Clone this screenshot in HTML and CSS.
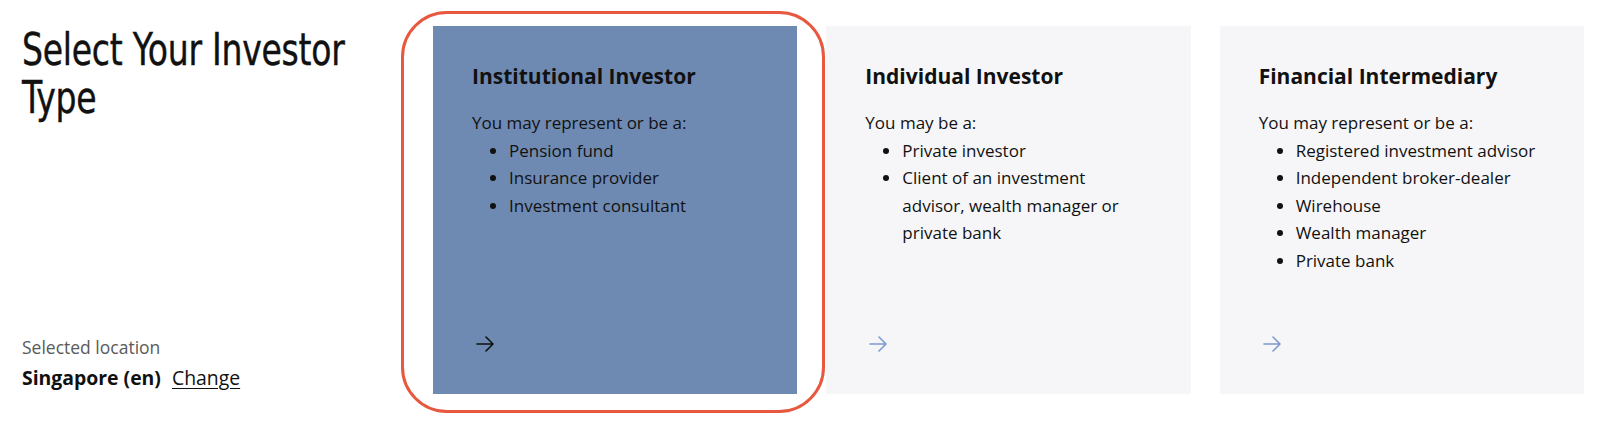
FILE: index.html
```html
<!DOCTYPE html>
<html lang="en">
<head>
<meta charset="utf-8">
<title>Select Your Investor Type</title>
<link rel="stylesheet" href="styles.css">
</head>
<body>
<main class="page">
  <section class="intro">
    <h1 class="title">Select Your Investor Type</h1>
    <div class="location">
      <p class="location-label">Selected location</p>
      <p class="location-value"><strong>Singapore (en)</strong><a class="change" href="#">Change</a></p>
    </div>
  </section>
  <section class="cards">
    <a class="card card-active" href="#">
      <span class="highlight"></span>
      <h2 class="card-title">Institutional Investor</h2>
      <p class="card-lead">You may represent or be a:</p>
      <ul class="card-list">
        <li>Pension fund</li>
        <li>Insurance provider</li>
        <li>Investment consultant</li>
      </ul>
      <svg class="arrow" width="18" height="16" viewBox="0 0 18 16" aria-hidden="true"><path d="M1 8H17M10 1L17 8L10 15" fill="none" stroke="currentColor" stroke-width="1.6" stroke-linecap="round" stroke-linejoin="round"/></svg>
    </a>
    <a class="card" href="#">
      <h2 class="card-title">Individual Investor</h2>
      <p class="card-lead">You may be a:</p>
      <ul class="card-list">
        <li>Private investor</li>
        <li>Client of an investment advisor, wealth manager or private bank</li>
      </ul>
      <svg class="arrow" width="18" height="16" viewBox="0 0 18 16" aria-hidden="true"><path d="M1 8H17M10 1L17 8L10 15" fill="none" stroke="currentColor" stroke-width="1.6" stroke-linecap="round" stroke-linejoin="round"/></svg>
    </a>
    <a class="card" href="#">
      <h2 class="card-title">Financial Intermediary</h2>
      <p class="card-lead">You may represent or be a:</p>
      <ul class="card-list">
        <li>Registered investment advisor</li>
        <li>Independent broker-dealer</li>
        <li>Wirehouse</li>
        <li>Wealth manager</li>
        <li>Private bank</li>
      </ul>
      <svg class="arrow" width="18" height="16" viewBox="0 0 18 16" aria-hidden="true"><path d="M1 8H17M10 1L17 8L10 15" fill="none" stroke="currentColor" stroke-width="1.6" stroke-linecap="round" stroke-linejoin="round"/></svg>
    </a>
  </section>
</main>
</body>
</html>
```

FILE: styles.css
```css
* { box-sizing: border-box; }

html, body {
  margin: 0;
  padding: 0;
  background: #ffffff;
  color: #111111;
  font-family: "Open Sans", "Noto Sans", "DejaVu Sans", sans-serif;
}

.page {
  display: flex;
  padding: 26px 16px 0 22px;
  height: 448px;
}

.intro {
  width: 411px;
  flex: none;
  height: 368px;
  display: flex;
  flex-direction: column;
  justify-content: space-between;
}

.title {
  margin: 0;
  width: 400px;
  font-family: "DejaVu Sans Condensed", "DejaVu Sans", sans-serif;
  font-stretch: condensed;
  font-weight: 400;
  font-size: 44px;
  line-height: 48px;
  color: #111111;
  letter-spacing: -0.3px;
  -webkit-text-stroke: 0.4px #111111;
  transform: scaleX(0.835);
  transform-origin: left top;
}

.location {
  padding-bottom: 3px;
}

.location-label {
  margin: 0;
  font-size: 17.5px;
  line-height: 24px;
  color: #5a5a5a;
}

.location-value {
  margin: 6px 0 0;
  font-size: 19.4px;
  line-height: 26px;
  color: #111111;
}

.location-value strong {
  font-weight: 700;
}

.change {
  margin-left: 11px;
  color: #111111;
  text-decoration: underline;
  text-underline-offset: 3px;
}

.cards {
  flex: 1;
  display: grid;
  grid-template-columns: repeat(3, 1fr);
  gap: 29px;
  height: 368px;
}

.card {
  position: relative;
  display: flex;
  flex-direction: column;
  padding: 36px 42px 42px 39px;
  background: #f6f6f8;
  color: #111111;
  text-decoration: none;
}

.card-active {
  background: #6f8ab2;
}

.highlight {
  position: absolute;
  left: -32px;
  top: -15px;
  right: -28px;
  bottom: -19px;
  border: 3px solid #e8583f;
  border-radius: 46px;
  pointer-events: none;
}

.card-title {
  margin: 0;
  font-size: 21px;
  line-height: 28px;
  font-weight: 700;
}

.card-lead {
  margin: 19px 0 0;
  font-size: 17px;
  line-height: 27.5px;
}

.card-list {
  margin: 0;
  padding-left: 37px;
  font-size: 17px;
  line-height: 27.5px;
}

.arrow {
  margin-top: auto;
  margin-left: 4px;
  color: #7b9bd0;
}

.card-active .arrow {
  color: #111111;
}
```
